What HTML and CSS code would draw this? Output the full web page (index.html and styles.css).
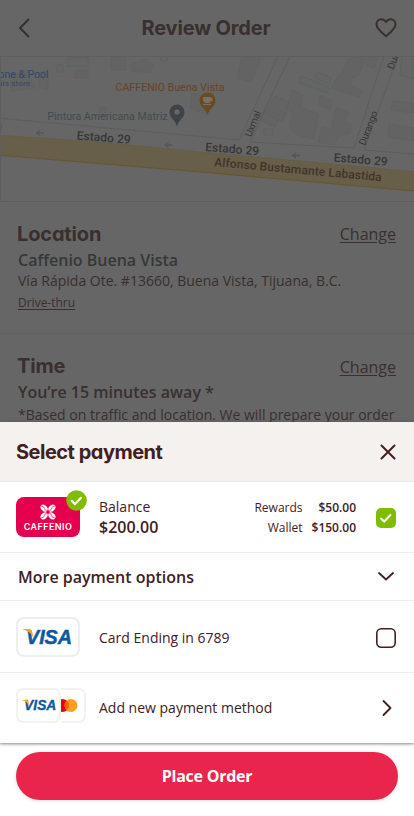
FILE: index.html
```html
<!DOCTYPE html>
<html lang="en">
<head>
<meta charset="utf-8">
<title>Review Order</title>
<link rel="stylesheet" href="styles.css">
</head>
<body>
<div class="screen">
  <main class="page">
    <header class="topbar">
      <svg class="back" width="14" height="22" viewBox="0 0 14 22"><path d="M11.500 2.500 3 11l8.500 8.500"/></svg>
      <h1 class="title">Review Order</h1>
      <svg class="heart" width="24" height="22" viewBox="0 0 24 22"><path d="M12 19.200C9 16.500 2.500 12 2.500 7.200 2.500 4.200 4.500 2.200 7.200 2.200c2 0 3.600 1.100 4.800 2.800 1.200-1.700 2.800-2.800 4.800-2.800 2.700 0 4.700 2 4.700 5C21.500 12 15 16.500 12 19.200z"/></svg>
    </header>
    <svg class="map" width="414" height="146" viewBox="0 0 414 146">
      <g fill="#636363" stroke="#606060" stroke-width=".6">
        <path d="M10 20l17-6 8 18-24 3zM39 16l9-1v19l-9-2zM76 14h12v8H75zM111 0h15v14h-15zM131 8l14-5 8 5-3 9-18-2zM100 51h6v8h-6z"/>
        <path d="M242 0l20-3-7 21-4 8-14-4zM275 40l14 6-6 20-17-9zM292 34l11 5-2 12 18 7-5 25-18-4-7-10 4-12-6-4zM264 52l16 7-5 12-15-7zM320 40l12 4-2 10-12-5zM336 52l12 4-3 9 7 4-3 9-9 1-6 10-16-3 4-15 9 2zM335 24l7-6 8-18 14 4-4 14-8 4-2 7 13 6-3 6-29-9zM360 0l19 0-5 12-18-8zM393 45l21 2v10l-24-3zM389 68l25 4v13l-26-4z"/>
        <path d="M192 37l15 4v18l-17-7z"/>
      </g>
      <g fill="#646666" stroke="#5b6161" stroke-width=".8">
        <path d="M57 9h6v7h-6zM68 2h20v8H67zM301 20l28 11-2 6-29-11zM318 16l13 6-2 6-14-6zM402 0h12v23l-14-4zM264 73h9v6h-9z"/>
        <circle cx="164" cy="2" r="4"/>
      </g>
      <g fill="#696969" stroke="#59595b" stroke-width=".7">
        <path stroke="none" d="M279 0h11L250 86h104L384 0h14l-34 94 50 4v18L207 97 0 79V62l239 22z" opacity=".2"/>
        <path fill="none" d="M0 62.300 207 81l32 3L278 0M290 0l-40 86 104 6L384 0M398 0l-34 94 50 4"/>
      </g>
      <path fill="#675f49" d="M0 79.300 100 86l107 10.500 207 19v19.500L207 116.500 0 99z"/>
      <path fill="none" stroke="#69552c" stroke-width="1.100" d="M0 99.300 80 106l127 10.500L414 135"/>
      <path fill="none" stroke="#665c42" stroke-width=".7" d="M0 79.300 100 86l107 10.500 207 19"/>
      <g stroke="#55555d" stroke-width="1.300" fill="none">
        <path id="arrow" d="M44 77h-7m3-2.500L36.500 77l3.500 2.500"/>
        <use href="#arrow" x="128.500" y="12"/>
        <use href="#arrow" x="256" y="22.500"/>
      </g>
      <g class="poi blue"><text x="-1.500" y="22" textLength="50">one &amp; Pool</text><text class="tiny" x="-2" y="30" textLength="32">als store</text></g>
      <text class="poi orange" x="115.500" y="34.500" textLength="109">CAFFENIO Buena Vista</text>
      <text class="poi slate" x="47.500" y="64" textLength="120">Pintura Americana Matriz</text>
      <path fill="#3d4346" d="M177 70.500c-1.200-6-7.500-8.500-7.500-14.500a7.500 7.500 0 0 1 15 0c0 6-6.300 8.500-7.500 14.500z"/><circle cx="177" cy="56" r="2.700" fill="#666"/>
      <path fill="#6b4a20" d="M207.500 59c-1.500-6-8-8.500-8-14.500a8 8 0 0 1 16 0c0 6-6.500 8.500-8 14.500z"/><path fill="#767169" d="M203 41h8v1h1.500v3H211l-1.500 2H205l-2-2.500zM203 48h8v1h-8z"/>
      <g class="street">
        <text transform="translate(76.500 83.500) rotate(4.500)" textLength="54">Estado 29</text>
        <text transform="translate(205 95) rotate(4.500)" textLength="54">Estado 29</text>
        <text transform="translate(333.500 105.500) rotate(4.500)" textLength="54">Estado 29</text>
        <text x="-5" y="76">9</text>
        <text class="avenue" transform="translate(214 110) rotate(5.200)" textLength="168">Alfonso Bustamante Labastida</text>
      </g>
      <g class="cross">
        <text transform="translate(251 81.500) rotate(-68)" textLength="27">Uxmal</text>
        <text transform="translate(365 90) rotate(-69)" textLength="36">Durango</text>
        <text transform="translate(393.500 14) rotate(-69)" textLength="36">Durango</text>
      </g>
      <path d="M0 .5h414M0 145.500h414M.5 0v146" stroke="#5e5e5e" fill="none"/>
    </svg>
    <section class="block">
      <div class="block-head"><h2>Location</h2><a class="change">Change</a></div>
      <p class="strong place">Caffenio Buena Vista</p>
      <p class="detail">Vía Rápida Ote. #13660, Buena Vista, Tijuana, B.C.</p>
      <a class="mode">Drive-thru</a>
    </section>
    <section class="block time">
      <div class="block-head"><h2>Time</h2><a class="change">Change</a></div>
      <p class="strong away">You’re 15 minutes away *</p>
      <p class="detail note">*Based on traffic and location. We will prepare your order</p>
    </section>
  </main>

  <section class="sheet">
    <header class="sheet-head">
      <h2 class="sheet-title">Select payment</h2>
      <svg width="20" height="20" viewBox="0 0 20 20" class="line"><path d="m3.500 3.500 13 13m0-13-13 13"/></svg>
    </header>
    <div class="row balance">
      <div class="wallet-card">
        <svg width="16" height="16" viewBox="0 0 16 16">
          <g id="bean"><ellipse cx="4.100" cy="4.100" rx="4" ry="2.900" transform="rotate(45 4.100 4.100)" fill="#fff"/><path d="M1.200 1.900Q4.500 2.600 4.200 4.200T6.900 6.600" stroke="#e5004f" stroke-width=".7" fill="none"/></g>
          <use href="#bean" transform="matrix(-1 0 0 1 16 0)"/><use href="#bean" transform="rotate(180 8 8)"/><use href="#bean" transform="matrix(1 0 0 -1 0 16)"/>
        </svg>
        <span class="brand">CAFFENIO</span>
        <svg class="badge" width="21" height="21" viewBox="0 0 21 21"><circle cx="10.500" cy="10.500" r="10.300" fill="#80bc00"/><path d="m5.700 10.800 3.200 3.200 6.200-6.200" fill="none" stroke="#fff" stroke-width="2.200" stroke-linecap="round"/></svg>
      </div>
      <div class="amount"><span>Balance</span><strong>$200.00</strong></div>
      <dl class="split"><dt>Rewards</dt><dd>$50.00</dd><dt>Wallet</dt><dd>$150.00</dd></dl>
      <svg class="check" width="20" height="20" viewBox="0 0 20 20"><rect width="20" height="20" rx="5" fill="#80bc00"/><path d="m5 10.500 3.200 3L14.500 7" fill="none" stroke="#fff" stroke-width="2" stroke-linecap="round"/></svg>
    </div>
    <div class="row more"><span>More payment options</span><svg width="18" height="12" viewBox="0 0 18 12" class="line thin"><path d="m2 2 7 6.500L16 2"/></svg></div>
    <div class="row card-row">
      <div class="visa-card">
        <svg width="50" height="18" viewBox="0 0 50 18"><text class="visa" x="3" y="16" textLength="46" lengthAdjust="spacingAndGlyphs">VISA</text><path d="M0 1h6q2.500 0 3 2l1.500 7Q7.500 3.500 0 1.600z" fill="#f9a51a"/></svg>
      </div>
      <span class="label">Card Ending in 6789</span>
      <svg class="box" width="20" height="20" viewBox="0 0 20 20"><rect x=".8" y=".8" width="18.400" height="18.400" rx="4.500"/></svg>
    </div>
    <div class="row add-row">
      <div class="pair">
        <div class="mini visa-mini"><svg width="35" height="13" viewBox="0 0 50 18"><text class="visa" x="3" y="16" textLength="46" lengthAdjust="spacingAndGlyphs">VISA</text><path d="M0 1h6q2.500 0 3 2l1.500 7Q7.500 3.500 0 1.600z" fill="#f9a51a"/></svg></div>
        <div class="mini mc-mini"><svg width="17" height="13" viewBox="0 0 17 13"><circle cx="1.500" cy="6.500" r="6.500" fill="#eb001b"/><circle cx="10" cy="6.500" r="6.500" fill="#f99f1b"/><path d="M5.750 1.600a6.500 6.500 0 0 1 0 9.800 6.500 6.500 0 0 1 0-9.800z" fill="#ff5f00"/></svg></div>
      </div>
      <span class="label">Add new payment method</span>
      <svg width="12" height="18" viewBox="0 0 12 18" class="line thin"><path d="m2.500 2 7 7-7 7"/></svg>
    </div>
  </section>
  <footer class="footer"><button class="place-order">Place Order</button></footer>
</div>
</body>
</html>
```
FILE: styles.css
```css
* { box-sizing: border-box; }
body { margin: 0; font-family: "Open Sans", sans-serif; color: #41201f; }
h1, h2, p, dl, dd { margin: 0; }
svg { display: block; flex: none; }
.screen { width: 414px; height: 816px; overflow: hidden; display: flex; flex-direction: column; background: #fff; }
.page { height: 422px; flex: none; overflow: hidden; background: #666; color: #3a2f2f; }

.topbar { height: 56px; padding: 0 16px 0 17px; display: flex; align-items: center; justify-content: space-between; }
.back, .heart { fill: none; stroke: #3a2f2f; stroke-width: 2; stroke-linecap: round; stroke-linejoin: round; }
.title, .block h2, .sheet-title { font: 700 20px/24px Inter, sans-serif; font-feature-settings: "cv11"; letter-spacing: -.15px; }
.title { margin-left: 7px; }
.sheet-title { letter-spacing: -.5px; }

.map { font-family: Roboto, sans-serif; }
.poi { font-size: 10.5px; }
.tiny { font-size: 8px; }
.blue { fill: #2f4869; }
.orange { fill: #6b421f; }
.slate { fill: #424a4f; }
.street { font-size: 12px; font-weight: 500; fill: #363636; }
.avenue { fill: #44332b; }
.cross { font-size: 10px; fill: #383838; }

.block { height: 132px; padding: 20px 18px 0; border-bottom: 1px solid #616161; white-space: nowrap; }
.block-head { display: flex; justify-content: space-between; height: 26px; }
.block h2 { margin-left: -1px; }
.change { font-size: 16px; line-height: 24px; text-decoration: underline; text-underline-offset: 2px; }
.time .change { line-height: 26px; }
.strong { font-size: 16px; line-height: 24px; font-weight: 600; }
.place { color: #353838; }
.detail { font-size: 14px; line-height: 18px; }
.mode { display: block; font-size: 12px; line-height: 17px; margin-top: 4px; text-decoration: underline; text-underline-offset: 2px; }
.time { height: 90px; border: 0; }
.note { margin-top: 2px; }

.sheet { height: 321px; flex: none; background: #fff; box-shadow: 0 1px 3px rgba(50, 25, 25, .55); position: relative; }
.sheet-head { height: 60px; padding: 0 16px; display: flex; align-items: center; justify-content: space-between; background: #f5f1ee; border-bottom: 1px solid #e9e9e9; }
.line { fill: none; stroke: #41201f; stroke-width: 2; stroke-linecap: round; stroke-linejoin: round; }
.thin { stroke-width: 1.8; }
.row { display: flex; align-items: center; padding: 0 18px 0 16px; border-bottom: 1px solid #ebebeb; }
.balance { height: 71px; }
.wallet-card { position: relative; width: 64px; height: 40px; border-radius: 8px; background: #e5004f; display: flex; flex-direction: column; align-items: center; padding-top: 7px; }
.brand { color: #fff; font: 600 9px/12px Inter, sans-serif; letter-spacing: .4px; margin-top: 1px; }
.badge { position: absolute; right: -7px; top: -7px; }
.amount { display: flex; flex-direction: column; margin-left: 19px; font-size: 14px; line-height: 20px; }
.amount strong { font-size: 16px; font-weight: 600; line-height: 21px; }
.split { margin: 2px 0 0 auto; display: grid; grid-template-columns: auto auto; column-gap: 9px; font-size: 12px; line-height: 20px; text-align: right; }
.split dd { font-weight: 600; }
.check { margin: 2px 0 0 20px; }
.more { height: 48px; padding-left: 18px; padding-right: 19px; justify-content: space-between; font-size: 16px; font-weight: 600; }
.card-row { height: 72px; }
.visa-card { width: 64px; height: 40px; border: 2px solid #eee; border-radius: 8px; display: flex; align-items: center; justify-content: center; }
.visa { font: italic 700 21px "Liberation Sans", sans-serif; fill: #0b59a2; stroke: #0b59a2; stroke-width: .5px; }
.label { font-size: 14px; margin: 2px auto 0 19px; }
.box { margin-top: 2px; fill: none; stroke: #41201f; stroke-width: 1.6; }
.add-row { height: 70px; border: 0; padding-right: 21px; }
.pair { display: flex; width: 70px; margin-top: -5px; }
.mini { height: 35px; border: 2px solid #f5f1ee; border-radius: 7px; display: flex; align-items: center; }
.visa-mini { width: 45px; padding-left: 4px; }
.mc-mini { width: 25px; border-left: 0; border-radius: 0 7px 7px 0; }
.add-row .label { margin: -1px auto 0 13px; }
.footer { flex: 1; padding: 9px 16px 0; }
.place-order { display: block; width: 382px; height: 48px; border: 0; border-radius: 24px; background: #e9254c; color: #fff; font: 700 16px "Open Sans", sans-serif; letter-spacing: -.25px; box-shadow: 0 1px 4px rgba(0, 0, 0, .12); }
```
